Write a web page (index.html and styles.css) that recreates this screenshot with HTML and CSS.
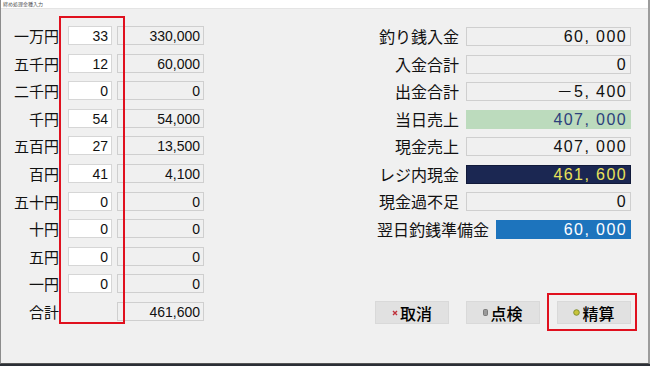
FILE: index.html
```html
<!DOCTYPE html>
<html>
<head>
    <link rel="stylesheet" href="styles.css">
</head>
<body>
    <div class="window">
        <div class="titlebar">締め処理金種入力</div>
        <div class="content">
            <div class="coins">
                <div class="row"><label>一万円</label><div class="count">33</div><div class="amount">330,000</div></div>
                <div class="row"><label>五千円</label><div class="count">12</div><div class="amount">60,000</div></div>
                <div class="row"><label>二千円</label><div class="count">0</div><div class="amount">0</div></div>
                <div class="row"><label>千円</label><div class="count">54</div><div class="amount">54,000</div></div>
                <div class="row"><label>五百円</label><div class="count">27</div><div class="amount">13,500</div></div>
                <div class="row"><label>百円</label><div class="count">41</div><div class="amount">4,100</div></div>
                <div class="row"><label>五十円</label><div class="count">0</div><div class="amount">0</div></div>
                <div class="row"><label>十円</label><div class="count">0</div><div class="amount">0</div></div>
                <div class="row"><label>五円</label><div class="count">0</div><div class="amount">0</div></div>
                <div class="row"><label>一円</label><div class="count">0</div><div class="amount">0</div></div>
                <div class="row"><label>合計</label><div class="count blank"></div><div class="amount">461,600</div></div>
                <div class="mark"></div>
            </div>

            <div class="summary">
                <div class="line"><label>釣り銭入金</label><div class="field">60, 000</div></div>
                <div class="line"><label>入金合計</label><div class="field">0</div></div>
                <div class="line"><label>出金合計</label><div class="field">－5, 400</div></div>
                <div class="line"><label>当日売上</label><div class="field sales">407, 000</div></div>
                <div class="line"><label>現金売上</label><div class="field">407, 000</div></div>
                <div class="line"><label>レジ内現金</label><div class="field drawer">461, 600</div></div>
                <div class="line"><label>現金過不足</label><div class="field">0</div></div>
                <div class="line"><label>翌日釣銭準備金</label><div class="field float">60, 000</div></div>

                <div class="buttons">
                    <button class="btn">
                        <svg width="6" height="6" viewBox="0 0 6 6"><path d="M1 1L5 5M5 1L1 5" stroke="#c0303a" stroke-width="1.4"/></svg>
                        取消
                    </button>
                    <button class="btn">
                        <svg width="5" height="7" viewBox="0 0 5 7"><rect x="0.5" y="0.5" width="4" height="6" rx="1" fill="#9a9a9a" stroke="#6a6a6a" stroke-width="0.8"/></svg>
                        点検
                    </button>
                    <button class="btn marked">
                        <svg width="7" height="7" viewBox="0 0 7 7"><circle cx="3.5" cy="3.5" r="2.8" fill="#c8c43a" stroke="#7a8a2a" stroke-width="0.9"/></svg>
                        精算
                    </button>
                </div>
            </div>
        </div>
    </div>
</body>
</html>
```

FILE: styles.css
```css
* {
    box-sizing: border-box;
    margin: 0;
    padding: 0;
}

body {
    background-color: #2b2f36;
    width: 650px;
    height: 366px;
    overflow: hidden;
    font-family: "Noto Sans CJK JP", sans-serif;
    color: #111;
}

.window {
    width: 650px;
    height: 364px;
    background-color: #f0f0f0;
    border-left: 1px solid #8c8c8c;
    border-right: 2px solid #9c9c9c;
    border-bottom: 1px solid #555;
    display: flex;
    flex-direction: column;
}

.titlebar {
    height: 9px;
    background-color: #ffffff;
    border-bottom: 1px solid #e4e4e4;
    font-size: 5px;
    line-height: 8px;
    color: #555;
    padding-left: 2px;
}

.content {
    flex: 1;
    display: flex;
    justify-content: space-between;
    padding: 17px 17px 0 0;
}

/* 金種 */
.coins {
    position: relative;
    display: flex;
    flex-direction: column;
    gap: 8.6px;
}

.row {
    display: flex;
    align-items: center;
    height: 19px;
}

.row label {
    width: 58px;
    margin-right: 9px;
    text-align: right;
    font-size: 15px;
    line-height: 19px;
}

.count, .amount {
    height: 19px;
    font-family: "Liberation Sans", Arial, sans-serif;
    font-size: 14px;
    line-height: 18px;
    text-align: right;
    padding-right: 3px;
}

.count {
    width: 44px;
    margin-right: 5px;
    background-color: #ffffff;
    border: 1px solid #d6d6d6;
}

.count.blank {
    background: none;
    border-color: transparent;
}

.amount {
    width: 87px;
    background-color: #f0f0f0;
    border: 1px solid #cfcfcf;
}

.mark {
    position: absolute;
    left: 58px;
    top: -10px;
    width: 66px;
    height: 308px;
    border: 2px solid #e0101e;
}

/* 集計 */
.summary {
    display: flex;
    flex-direction: column;
    align-items: flex-end;
    gap: 8.5px;
    padding-top: 1px;
}

.line {
    display: flex;
    align-items: center;
    gap: 7px;
    height: 19px;
}

.line label {
    font-size: 16px;
    line-height: 19px;
}

.field {
    width: 165px;
    height: 19px;
    background-color: #f0f0f0;
    border: 1px solid #cfcfcf;
    text-align: right;
    padding-right: 3px;
    font-family: "Liberation Sans", "Noto Sans CJK JP", sans-serif;
    font-size: 16px;
    letter-spacing: 1.4px;
    line-height: 18px;
    color: #111;
}

.field.sales {
    background-color: #bcdbbd;
    border-color: #bcdbbd;
    color: #2c3f7c;
}

.field.drawer {
    background-color: #1b2752;
    border-color: #111a3a;
    color: #e9e25a;
}

.field.float {
    width: 135px;
    background-color: #1d74bd;
    border-color: #1d74bd;
    color: #ffffff;
}

.buttons {
    display: flex;
    gap: 17px;
    margin-top: 54px;
}

.btn {
    position: relative;
    width: 74px;
    height: 23px;
    display: flex;
    align-items: center;
    justify-content: center;
    gap: 2px;
    background-color: #e1e1e1;
    border: 1px solid #d9d9d9;
    font-family: "Noto Sans CJK JP", sans-serif;
    font-size: 16px;
    font-weight: 500;
    color: #000;
}

.btn.marked::after {
    content: "";
    position: absolute;
    left: -11px;
    top: -9px;
    right: -7px;
    bottom: -8px;
    border: 2px solid #e0101e;
}
```
